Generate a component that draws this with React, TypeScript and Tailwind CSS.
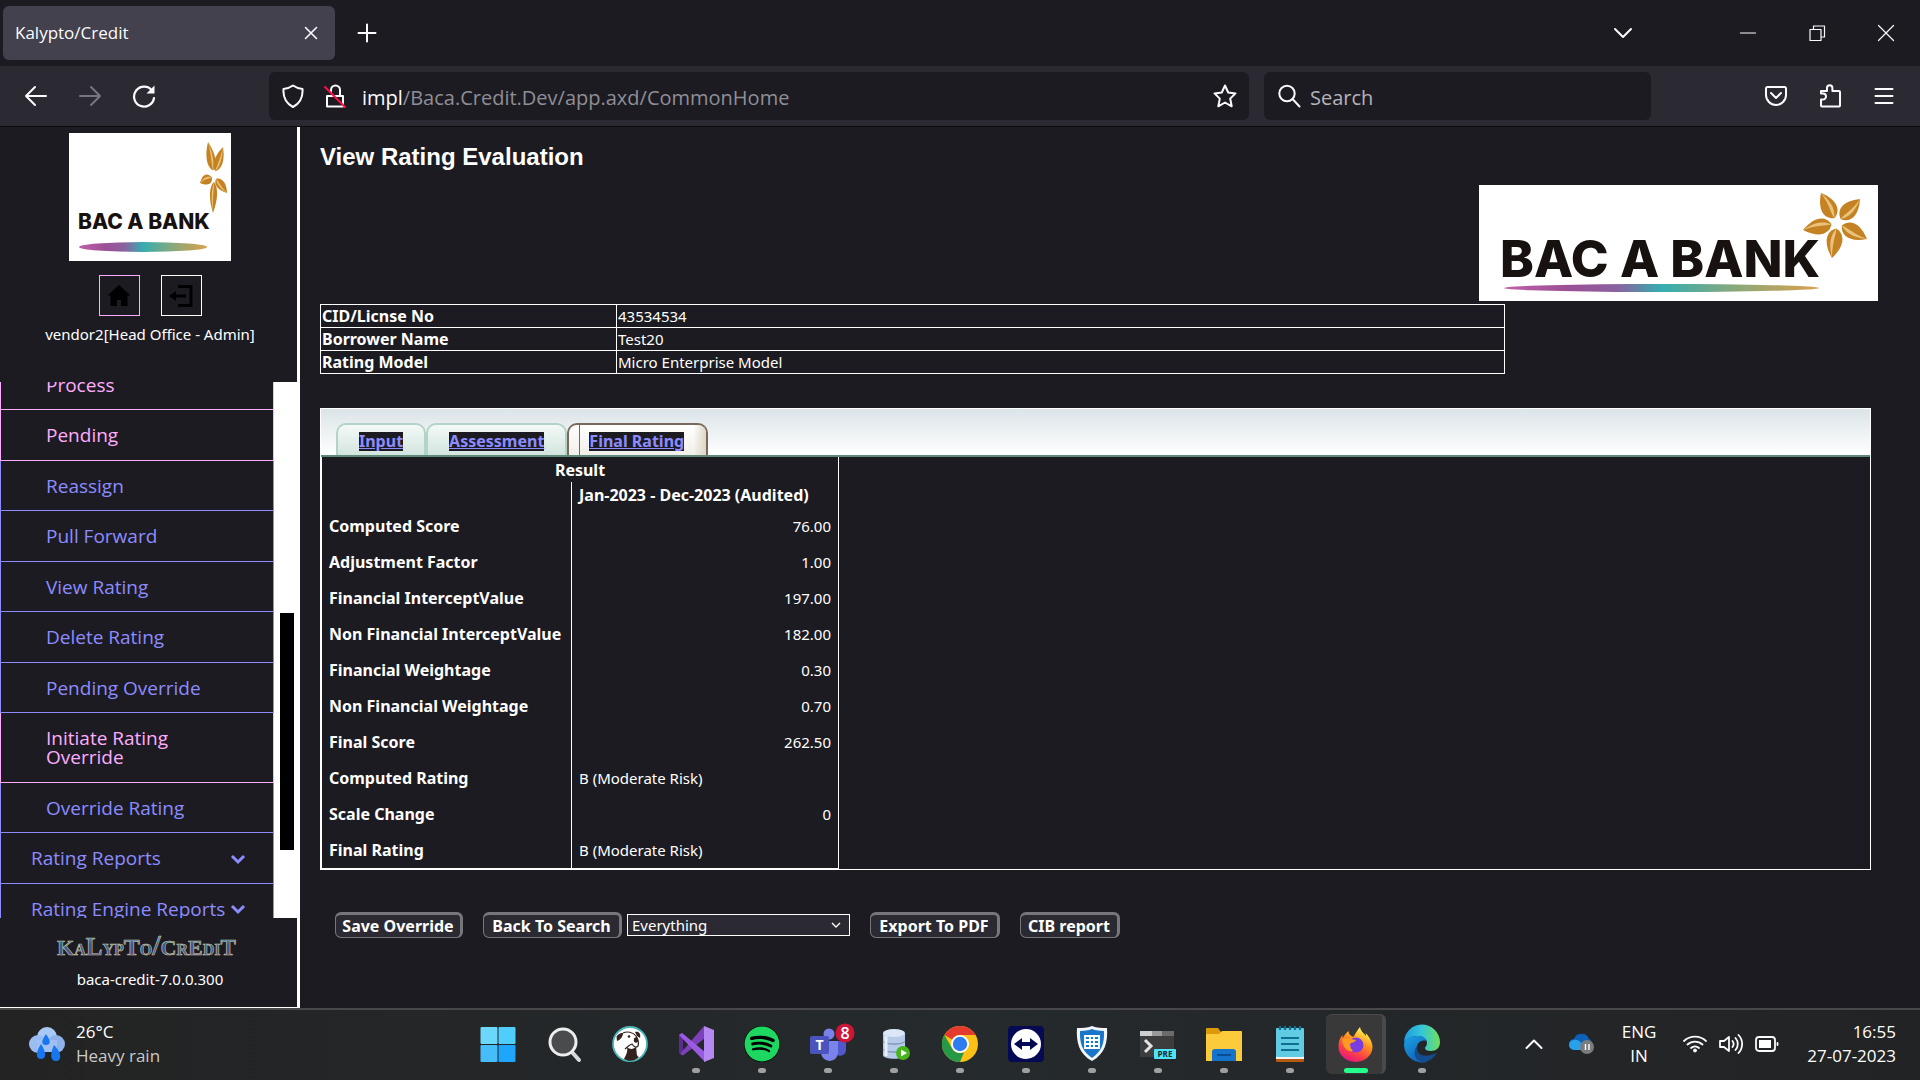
import React from "react";
import { FaSpotify } from "react-icons/fa";

const UI = "font-['Open_Sans','Noto_Sans',sans-serif]";
const BODY = "font-['Noto_Sans',sans-serif]";

type Pt = [number, number];

function petal(c: Pt, t: Pt, w: number) {
  const dx = t[0] - c[0];
  const dy = t[1] - c[1];
  const s: Pt = [c[0] + dx * 0.16, c[1] + dy * 0.16];
  const at = (f: number, side: number) => {
    const len = Math.hypot(dx, dy);
    return `${s[0] + dx * f - (dy / len) * w * side},${s[1] + dy * f + (dx / len) * w * side}`;
  };
  return {
    full: `M${s} C${at(0.12, 0.9)} ${at(0.45, 1)} ${t} C${at(0.45, -1)} ${at(0.12, -0.9)} ${s}Z`,
    vein: `M${s} C${at(0.15, -0.1)} ${at(0.4, 0.2)} ${t} C${at(0.4, 0.55)} ${at(0.2, 0.35)} ${s}Z`,
  };
}

function BankLogo(props: {
  id: string;
  width: number;
  height: number;
  center: Pt;
  tips: Pt[];
  petalWidths: number[];
  text: { x: number; y: number; size: number };
  bar: { x1: number; x2: number; y: number; r: number };
}) {
  const { id, width, height, center, tips, petalWidths, text, bar } = props;
  return (
    <svg width={width} height={height} viewBox={`0 0 ${width} ${height}`} role="img" aria-label="BAC A BANK" className="block bg-white">
      <defs>
        <linearGradient id={id}>
          <stop offset="0" stopColor="#c061a8" />
          <stop offset=".2" stopColor="#9c4f96" />
          <stop offset=".36" stopColor="#8a62a0" />
          <stop offset=".5" stopColor="#35aeb0" />
          <stop offset=".75" stopColor="#8fa878" />
          <stop offset="1" stopColor="#dba04a" />
        </linearGradient>
      </defs>
      <text x={text.x} y={text.y} fontSize={text.size} fontWeight="800" fill="#17110f" fontFamily="Inter, sans-serif">
        BAC A BANK
      </text>
      <ellipse cx={(bar.x1 + bar.x2) / 2} cy={bar.y} rx={(bar.x2 - bar.x1) / 2} ry={bar.r} fill={`url(#${id})`} />
      {tips.map((t, i) => {
        const p = petal(center, t, petalWidths[i]);
        return (
          <g key={i}>
            <path d={p.full} fill="#c58222" />
            <path d={p.vein} fill="#e9c27c" />
          </g>
        );
      })}
    </svg>
  );
}

function Stroke({ size = 24, children, w = 2, color = "#fbfbfe" }: { size?: number; children: React.ReactNode; w?: number; color?: string }) {
  return (
    <svg width={size} height={size} viewBox="0 0 24 24" fill="none" stroke={color} strokeWidth={w} strokeLinecap="round" strokeLinejoin="round" aria-hidden="true">
      {children}
    </svg>
  );
}

function TabStrip() {
  return (
    <header className="flex h-[66px] shrink-0 items-center bg-[#1c1b22] pl-[3px] text-[#fbfbfe]">
      <div className="flex h-[54px] w-[332px] items-center justify-between rounded-[6px] bg-[#42414d] pl-3 pr-3">
        <span className="text-[17px]">Kalypto/Credit</span>
        <button aria-label="Close tab">
          <Stroke w={1.6}><path d="M6.500 6.500l11 11M17.500 6.500l-11 11" /></Stroke>
        </button>
      </div>
      <button aria-label="New tab" className="ml-5">
        <Stroke><path d="M12 3.500v17M3.500 12h17" /></Stroke>
      </button>
      <div className="ml-auto flex items-center">
        <button aria-label="List all tabs" className="mr-[50px] flex w-20 justify-center">
          <Stroke><path d="M4 8l8 8 8-8" /></Stroke>
        </button>
        <button aria-label="Minimize" className="flex w-[69px] justify-center">
          <Stroke w={1.2}><path d="M4.500 12h15" /></Stroke>
        </button>
        <button aria-label="Restore" className="flex w-[69px] justify-center">
          <Stroke w={1.2}><path d="M5 8.500h11v11H5zM8.500 8.500V5h11v11H16" /></Stroke>
        </button>
        <button aria-label="Close window" className="flex w-[69px] justify-center">
          <Stroke w={1.2}><path d="M4.500 4.500l15 15M19.500 4.500l-15 15" /></Stroke>
        </button>
      </div>
    </header>
  );
}

function NavBar() {
  return (
    <nav className="flex h-[61px] shrink-0 items-center border-b border-[#0c0c0d] bg-[#2b2a33] pr-6 text-[#fbfbfe]">
      <button aria-label="Back" className="ml-6">
        <Stroke><path d="M22 12H2M11 3l-9 9 9 9" /></Stroke>
      </button>
      <button aria-label="Forward" className="ml-[30px]">
        <Stroke color="#77767f"><path d="M2 12h20M13 3l9 9-9 9" /></Stroke>
      </button>
      <button aria-label="Reload" className="ml-[30px]">
        <Stroke w={2.2}>
          <path d="M22 14a10 10 0 1 1-2-7.500" />
          <path d="M22.500 1.500v8h-8z" fill="#fbfbfe" stroke="none" />
        </Stroke>
      </button>
      <div className="ml-[113px] flex h-12 w-[980px] items-center rounded-[6px] bg-[#1c1b22] px-3">
        <Stroke><path d="M12 1.500c3 2.200 6 3 9.500 3.500.5 7-2 14-9.500 18C4.500 19 2 12 2.500 5 6 4.500 9 3.700 12 1.500z" /></Stroke>
        <span className="ml-[18px]">
          <Stroke>
            <path d="M4 12h16v10.500H4zM8 8V6a4.500 4.500 0 0 1 9 0v6" />
            <path d="M2 3l20 20" stroke="#ff0f3f" />
          </Stroke>
        </span>
        <div role="textbox" aria-label="Address" className="ml-[15px] flex-1 pt-[3px] text-xl text-[#8f8e97]">
          <span className="text-[#fbfbfe]">impl</span>/Baca.Credit.Dev/app.axd/CommonHome
        </div>
        <button aria-label="Bookmark this page">
          <Stroke><path d="M12 1.500l3.200 7 7.300.9-5.300 5.200L18.700 22.300 12 18.500 5.300 22.300l1.500-7.700L1.500 9.400l7.300-.9z" /></Stroke>
        </button>
      </div>
      <div className="ml-[15px] flex h-12 w-[387px] items-center rounded-[6px] bg-[#1c1b22] pl-[13px]">
        <Stroke><circle cx="10" cy="9.500" r="7.700" /><path d="M15.500 15l7 7.500" /></Stroke>
        <input aria-label="Search" placeholder="Search" className="ml-[9px] min-w-0 flex-1 bg-transparent pt-[3px] text-xl outline-none placeholder:text-[#b4b3bb]" />
      </div>
      <div className="ml-auto flex gap-[30px]">
        <button aria-label="Save to Pocket">
          <Stroke><path d="M2 4.500a1.500 1.500 0 0 1 1.500-1.500h17A1.500 1.500 0 0 1 22 4.500V11a10 10 0 0 1-20 0zM7 9l5 5 5-5" /></Stroke>
        </button>
        <button aria-label="Extensions">
          <Stroke><path d="M3 21.500v-6h2a3 3 0 0 0 0-6H3V7h6V4a2.700 2.700 0 0 1 5.400 0v3H21a1 1 0 0 1 1 1v13.500a1 1 0 0 1-1 1H4a1 1 0 0 1-1-1z" /></Stroke>
        </button>
        <button aria-label="Open application menu">
          <Stroke><path d="M3.500 5h17M3.500 12h17M3.500 19h17" /></Stroke>
        </button>
      </div>
    </nav>
  );
}

const MENU: { label: string; visited?: boolean; tall?: boolean; top?: boolean }[] = [
  { label: "Process", visited: true },
  { label: "Pending", visited: true },
  { label: "Reassign" },
  { label: "Pull Forward" },
  { label: "View Rating" },
  { label: "Delete Rating" },
  { label: "Pending Override" },
  { label: "Initiate Rating Override", visited: true, tall: true },
  { label: "Override Rating" },
  { label: "Rating Reports", top: true },
  { label: "Rating Engine Reports", top: true },
];

function Sidebar() {
  return (
    <aside className="flex w-[300px] shrink-0 flex-col border-b border-r-[3px] border-white">
      <div className="-mr-[3px] flex h-[255px] shrink-0 flex-col items-center pt-[6px]">
        <BankLogo
          id="bar-small"
          width={162}
          height={128}
          center={[145, 43]}
          tips={[[139, 9], [154, 14], [158, 60], [144, 80], [131, 50]]}
          petalWidths={[6, 6, 6, 5, 7]}
          text={{ x: 9, y: 96, size: 21 }}
          bar={{ x1: 10, x2: 138, y: 114, r: 5 }}
        />
        <div className="mt-[14px] flex gap-[21px]">
          <button aria-label="Home" className="flex size-[41px] items-center justify-center border border-[#ffadff]">
            <svg width="24" height="24" viewBox="0 0 24 24"><path d="M12 1L0.500 11.500h3V22H10v-6h4v6h6.500V11.500h3z" fill="#000" /></svg>
          </button>
          <button aria-label="Log out" className="flex size-[41px] items-center justify-center border border-white">
            <svg width="24" height="24" viewBox="0 0 24 24" fill="none" stroke="#000" strokeWidth="3"><path d="M9 2.500h13v19H9M17 12H5" /><path d="M0 12l7-5v10z" fill="#000" stroke="none" /></svg>
          </button>
        </div>
        <p className={`mt-[6px] text-[15px] leading-6 text-white ${BODY}`}>vendor2[Head Office - Admin]</p>
      </div>

      <div className="flex min-h-0 flex-1 overflow-hidden bg-white">
        <ul className="-mt-[22px] w-[274px] self-start bg-[#1c1b22]">
          {MENU.map((m) => (
            <li key={m.label} className={m.tall ? "h-[70px]" : "odd:h-[50px] even:h-[51px]"}>
              <a
                href="#"
                className={`flex h-full items-center justify-between border-x border-b pr-[27px] pt-px text-[19px] leading-[19px] ${m.top ? "pl-[30px]" : "pl-[45px]"} ${m.visited ? "border-[#ffadff] text-[#ffadff]" : "border-[#8c8cff] text-[#8c8cff]"}`}
              >
                <span className={m.tall ? "w-36" : "whitespace-nowrap"}>{m.label}</span>
                {m.top && (
                  <svg width="16" height="16" viewBox="0 0 16 16" fill="none" stroke="#8c8cff" strokeWidth="3"><path d="M2 5l6 6 6-6" /></svg>
                )}
              </a>
            </li>
          ))}
        </ul>
        <div className="flex flex-1 flex-col items-center pr-[3px] pl-[6px]">
          <div className="flex-[231]" />
          <div className="w-[14px] flex-[237] bg-black" />
          <div className="flex-[68]" />
        </div>
      </div>

      <div className="-mr-[3px] flex h-[89px] shrink-0 flex-col items-center pt-3">
        <svg width="184" height="34" viewBox="0 0 184 34" role="img" aria-label="Kalypto/Credit" className="mr-[5px]">
          <defs>
            <linearGradient id="kal" x2="0" y2="1">
              <stop offset="0.100" stopColor="#4fa8ea" />
              <stop offset="0.500" stopColor="#2b5f96" />
              <stop offset="0.900" stopColor="#5a4a90" />
            </linearGradient>
          </defs>
          <text x="1" y="25" fontFamily="'Liberation Serif', serif" fontWeight="700" fill="url(#kal)" stroke="#cfc9a0" strokeWidth="0.600" fontSize="16">
            <tspan fontSize="22">K</tspan>A<tspan fontSize="25">L</tspan>YP<tspan fontSize="24">T</tspan>O<tspan fontSize="30">/</tspan>
            <tspan fontSize="22">C</tspan>R<tspan fontSize="22">E</tspan>DI<tspan fontSize="23">T</tspan>
          </text>
        </svg>
        <p className={`mt-[3px] text-[15px] leading-6 text-white ${BODY}`}>baca-credit-7.0.0.300</p>
      </div>
    </aside>
  );
}

const INFO = [
  ["CID/Licnse No", "43534534"],
  ["Borrower Name", "Test20"],
  ["Rating Model", "Micro Enterprise Model"],
];

const RESULTS: [string, string][] = [
  ["Computed Score", "76.00"],
  ["Adjustment Factor", "1.00"],
  ["Financial InterceptValue", "197.00"],
  ["Non Financial InterceptValue", "182.00"],
  ["Financial Weightage", "0.30"],
  ["Non Financial Weightage", "0.70"],
  ["Final Score", "262.50"],
  ["Computed Rating", "B (Moderate Risk)"],
  ["Scale Change", "0"],
  ["Final Rating", "B (Moderate Risk)"],
];

const BTN = "h-[26px] rounded-[6px] border border-r-[3px] border-t-[3px] border-[#77767c] bg-[#2b2a33] font-bold leading-5 whitespace-nowrap";

function Main() {
  return (
    <main className={`min-w-0 flex-1 overflow-hidden pl-5 text-base text-white ${BODY}`}>
      <h1 className="mt-4 font-['Liberation_Sans',Arial,sans-serif] text-2xl font-bold leading-7">View Rating Evaluation</h1>
      <div className="mt-[14px] flex justify-end pr-[42px]">
        <BankLogo
          id="bar-large"
          width={399}
          height={116}
          center={[358, 38]}
          tips={[[342, 8], [381, 14], [388, 54], [353, 73], [324, 45]]}
          petalWidths={[11, 11, 11, 11, 11]}
          text={{ x: 21, y: 92, size: 51 }}
          bar={{ x1: 25, x2: 340, y: 103, r: 4 }}
        />
      </div>

      <div className="mr-[49px]">
        <table className="mt-[3px] w-[1185px] border-collapse">
          <tbody>
            {INFO.map(([k, v]) => (
              <tr key={k} className="h-[23px]">
                <th scope="row" className="w-[296px] border border-white p-0 pl-px text-left font-bold leading-[22px]">{k}</th>
                <td className="border border-white p-0 pl-px text-[15px] leading-[22px]">{v}</td>
              </tr>
            ))}
          </tbody>
        </table>

        <section className="mt-[34px] border border-white">
          <div className="flex h-12 items-end border-b-2 border-[#5f8a78] bg-linear-to-b from-[#dbe4e8] to-white pl-[15px] font-bold">
            {["Input", "Assessment"].map((t) => (
              <a key={t} href="#" className="flex h-8 items-center rounded-t-[10px] border-2 border-b-0 border-[#b3d3c8] bg-linear-to-b from-[#f3f9f7] to-[#d3e5df] px-[21px] pt-[2px]">
                <span className="bg-[#1c1b22] leading-[19px] text-[#8c8cff] underline">{t}</span>
              </a>
            ))}
            <a href="#" className="flex h-8 items-stretch rounded-t-[10px] border-2 border-b-0 border-[#7b685c] bg-linear-to-b from-white to-[#f1efe9]">
              <span className="w-[11px] border-r border-[#7b685c]" />
              <span className="flex items-center rounded-tr-[8px] bg-linear-to-r from-transparent from-90% to-[#dcd8c4] pt-[2px] pr-[22px] pl-[9px]">
                <span className="bg-[#1c1b22] leading-[19px] text-[#8c8cff] underline">Final Rating</span>
              </span>
            </a>
          </div>
          <table className="w-[518px] border-collapse border border-t-0 border-white">
            <thead>
              <tr className="h-[25px]">
                <th colSpan={2} className="p-0 leading-5">Result</th>
              </tr>
              <tr className="h-[26px]">
                <td className="w-[250px] border-r border-white p-0" />
                <th scope="col" className="p-0 px-[7px] text-left leading-5 whitespace-nowrap">Jan-2023 - Dec-2023 (Audited)</th>
              </tr>
            </thead>
            <tbody>
              {RESULTS.map(([k, v]) => (
                <tr key={k} className="h-9">
                  <th scope="row" className="border-r border-white p-0 pl-[7px] text-left leading-5 whitespace-nowrap">{k}</th>
                  <td className={`p-0 px-[7px] text-[15px] leading-5 ${v.startsWith("B") ? "text-left" : "text-right"}`}>{v}</td>
                </tr>
              ))}
            </tbody>
          </table>
        </section>
      </div>

      <div className="mt-[42px] flex items-center pl-[15px]">
        <button className={`w-[128px] ${BTN}`}>Save Override</button>
        <button className={`ml-5 w-[139px] ${BTN}`}>Back To Search</button>
        <div className="relative ml-[5px]">
          <select aria-label="Export section" className="block h-[22px] w-[223px] appearance-none border border-white bg-[#2b2a33] pl-1 text-[15px] leading-5">
            <option>Everything</option>
          </select>
          <svg width="12" height="12" viewBox="0 0 12 12" fill="none" stroke="#fff" strokeWidth="1.400" className="pointer-events-none absolute top-[5px] right-2"><path d="M2 4l4 4 4-4" /></svg>
        </div>
        <button className={`ml-5 w-[130px] ${BTN}`}>Export To PDF</button>
        <button className={`ml-5 w-[100px] ${BTN}`}>CIB report</button>
      </div>
    </main>
  );
}

function I({ children }: { children: React.ReactNode }) {
  return <svg width="36" height="36" viewBox="0 0 36 36" className="overflow-visible" aria-hidden="true">{children}</svg>;
}

const APPS: { name: string; dot?: boolean; active?: boolean; icon: React.ReactNode }[] = [
  {
    name: "Start",
    icon: (
      <I>
        <rect x="0.500" y="1" width="17" height="17" rx="1" fill="#6bd7fb" /><rect x="18.500" y="1" width="17" height="17" rx="1" fill="#4fcdfb" />
        <rect x="0.500" y="19" width="17" height="17" rx="1" fill="#45bdf8" /><rect x="18.500" y="19" width="17" height="17" rx="1" fill="#1ea6fb" />
      </I>
    ),
  },
  {
    name: "Search",
    icon: (
      <I>
        <path d="M25 25l8 9" stroke="#d6dadb" strokeWidth="4" strokeLinecap="round" />
        <circle cx="17" cy="16" r="13" fill="#494b4c" stroke="#eceeee" strokeWidth="3" />
      </I>
    ),
  },
  {
    name: "DBeaver",
    icon: (
      <I>
        <circle cx="18" cy="18" r="17" fill="#fff" stroke="#4bb5b8" strokeWidth="1.800" />
        <path d="M11 7c4-2 10-1 13 3 2 3 3 7 2 10-2 2-4 1-6-2-3 1-5 3-7 5" fill="none" stroke="#33231c" strokeWidth="1.200" />
        <path d="M4.500 10.500C6 8 9 6.500 11 7c0 4-3 7-6 8z" fill="#33231c" />
        <path d="M23 6c4-1 6 2 5 6l-3-2z" fill="#33231c" />
        <circle cx="17" cy="10.500" r="1.300" fill="#33231c" /><ellipse cx="24" cy="14" rx="2.200" ry="2.800" fill="#33231c" />
        <path d="M15 21c3 3 7 2 9 0 1 5 0 9 3 10-4 4-10 5-15 2 2-4 4-7 3-12z" fill="#33231c" />
      </I>
    ),
  },
  {
    name: "Visual Studio",
    dot: true,
    icon: (
      <I>
        <path d="M1 9l3-2 5 4v14l-5 4-3-2z" fill="#5b2b92" />
        <path d="M5 12v12l4-3v-6z" fill="#25282b" />
        <path d="M26 0L2 28l3 1.500L27 12z" fill="#7d40bb" />
        <path d="M4 7L27 26v10L1 9z" fill="#9b5be0" />
        <path d="M26 0l10 4v28l-10 4z" fill="#b688f2" />
      </I>
    ),
  },
  { name: "Spotify", dot: true, icon: <span className="rounded-full bg-black"><FaSpotify size={36} color="#1ed760" /></span> },
  {
    name: "Teams",
    dot: true,
    icon: (
      <I>
        <circle cx="19" cy="8" r="5.500" fill="#7b83eb" /><circle cx="31" cy="10" r="4" fill="#5059c9" />
        <path d="M24 15h12v9a6 6 0 0 1-9 5z" fill="#5059c9" /><path d="M11 15h17v11a8.500 8.500 0 0 1-17 1z" fill="#7b83eb" />
        <rect x="0" y="10" width="19" height="18" rx="2" fill="#4b53bc" />
        <text x="9.500" y="24" textAnchor="middle" fontSize="14" fontWeight="700" fill="#fff" fontFamily="Open Sans, sans-serif">T</text>
        <circle cx="35" cy="7" r="9.500" fill="#cf1639" />
        <text x="35" y="13" textAnchor="middle" fontSize="16" fontWeight="600" fill="#fff" fontFamily="Open Sans, sans-serif">8</text>
      </I>
    ),
  },
  {
    name: "Database tools",
    dot: true,
    icon: (
      <I>
        <path d="M7 7v22c0 5 22 5 22 0V7z" fill="#b7cbe8" /><path d="M7 15c2 4 20 4 22 0M7 23c2 4 20 4 22 0" fill="none" stroke="#7d96bb" strokeWidth="1.400" />
        <ellipse cx="18" cy="7" rx="11" ry="4" fill="#dbe7f6" /><path d="M10 10v20" stroke="#e6effa" strokeWidth="3" />
        <circle cx="27" cy="27" r="7" fill="#47b51a" /><path d="M25 23.500l6 3.500-6 3.500z" fill="#fff" />
      </I>
    ),
  },
  {
    name: "Chrome",
    dot: true,
    icon: (
      <I>
        <circle cx="18" cy="18" r="18" fill="#fbc116" />
        <path d="M2.400 9A18 18 0 0 1 33.600 9H18a9 9 0 0 0-7.800 4.500z" fill="#e33b2e" />
        <path d="M2.400 9L10.200 22.500A9 9 0 0 0 18 27L22 26.500 18 36A18 18 0 0 1 2.400 9z" fill="#279847" />
        <circle cx="18" cy="18" r="9" fill="#fff" /><circle cx="18" cy="18" r="7.200" fill="#2e7af0" />
      </I>
    ),
  },
  {
    name: "TeamViewer",
    dot: true,
    icon: (
      <I>
        <rect width="36" height="36" rx="4" fill="#050a52" /><circle cx="18" cy="18" r="15" fill="#fff" />
        <path d="M6 18l8-6v4h8v-4l8 6-8 6v-4h-8v4z" fill="#050a52" />
      </I>
    ),
  },
  {
    name: "VPN Shield",
    dot: true,
    icon: (
      <I>
        <path d="M18 0c5 2 10 2 15 2 1 14-2 26-15 33C5 28 2 16 3 2c5 0 10 0 15-2z" fill="#f2f6fa" />
        <path d="M18 3c4 1.500 8 1.800 12 2 .5 12-2 20-12 27C8 25 5.500 17 6 5c4-.2 8-.5 12-2z" fill="#1976c8" />
        <path d="M11 10h14v12H11zM16 10v12M20 10v12M11 14h14M11 18h14" fill="none" stroke="#fff" strokeWidth="1.800" />
      </I>
    ),
  },
  {
    name: "Terminal Preview",
    dot: true,
    icon: (
      <I>
        <rect x="0" y="5" width="34" height="26" fill="#3d3d3e" /><rect x="0" y="5" width="12" height="5" fill="#cfcfcf" /><rect x="12" y="5" width="10" height="5" fill="#9a9a9a" /><rect x="22" y="5" width="12" height="5" fill="#6b6b6b" />
        <path d="M5 14l6 6-6 6" fill="none" stroke="#e4e4e4" strokeWidth="3" />
        <rect x="14" y="23" width="22" height="10" rx="1" fill="#4fe3fb" />
        <text x="25" y="31" textAnchor="middle" fontSize="8" fontWeight="700" fill="#10282c" fontFamily="Open Sans, sans-serif">PRE</text>
      </I>
    ),
  },
  {
    name: "File Explorer",
    dot: true,
    icon: (
      <I>
        <path d="M0 3a1 1 0 0 1 1-1h11l3 4v6H0z" fill="#dc9a08" /><path d="M0 8h13l3-3h19a1 1 0 0 1 1 1v29H0z" fill="#fccb3c" />
        <path d="M6 35V26a3 3 0 0 1 3-3h18a3 3 0 0 1 3 3v9z" fill="#1573cc" /><path d="M11 29h14" stroke="#0a4b91" strokeWidth="2" />
      </I>
    ),
  },
  {
    name: "Notepad",
    dot: true,
    icon: (
      <I>
        <rect x="4" y="30" width="28" height="6" rx="1" fill="#b6580e" /><path d="M4 30h28v3H4z" fill="#f4f4f4" />
        <rect x="4" y="2" width="28" height="29" rx="1" fill="#61cbe3" />
        <path d="M8 0v4M13 0v4M18 0v4M23 0v4M28 0v4" stroke="#0d6f90" strokeWidth="2.200" /><path d="M9 12h18M9 18h18M9 24h18" stroke="#0d6f90" strokeWidth="2" />
      </I>
    ),
  },
  {
    name: "Firefox",
    active: true,
    icon: (
      <I>
        <defs>
          <linearGradient id="ff" x1="0.800" y1="0" x2="0.300" y2="1"><stop offset="0.100" stopColor="#fff14a" /><stop offset="0.450" stopColor="#ff8a1e" /><stop offset="0.750" stopColor="#fb3a4a" /><stop offset="1" stopColor="#e01586" /></linearGradient>
        </defs>
        <path d="M22 0c1 5 4 6 6 9 0-1 0-2-.5-3 5 5 7 10 7 14a17 15 0 0 1-34 0c0-5 1-9 4-12v3c2-2 3-5 6-7 0 3 2 5 5 6 2-4 4-7 6.500-10z" fill="url(#ff)" />
        <circle cx="18" cy="18" r="7.500" fill="#7a3ee0" /><path d="M4 12c4-1 8 0 14 1-1 3-5 2-6 4 0 3 1 5 3 7-6 1-10-3-11-12z" fill="#ff9a20" />
      </I>
    ),
  },
  {
    name: "Edge",
    dot: true,
    icon: (
      <I>
        <defs>
          <linearGradient id="edge-top"><stop stopColor="#1b9de2" /><stop offset="0.500" stopColor="#35c6d8" /><stop offset="1" stopColor="#6fe05a" /></linearGradient>
          <linearGradient id="edge-body" x2="0.600" y2="1"><stop stopColor="#1aa2e6" /><stop offset="1" stopColor="#1160b8" /></linearGradient>
        </defs>
        <path d="M0 17A18 18 0 0 1 36 16c0 6-4 9-9 9-4 0-6-1-6-3 0-1 2-2 2-5 0-4-4-7-9-7-8 0-13 4-14 7z" fill="url(#edge-top)" />
        <path d="M0 18c1-5 6-8 13-8 5 0 9 2 10 5-7-2-11 3-10 9 1 7 6 11 11 11.500A18 18 0 0 1 0 18z" fill="url(#edge-body)" />
        <path d="M13 20c-1 8 5 13 20 7-4 6-9 9-15 9-7-2-10-9-5-16z" fill="#134d8f" />
      </I>
    ),
  },
];

function Taskbar() {
  return (
    <footer className="grid h-[72px] shrink-0 grid-cols-[1fr_auto_1fr] border-t-2 border-[#48484a] bg-linear-to-r from-[#232323] via-[#252a2d] to-[#222324] text-[17px] leading-6 text-white">
      <div className="flex items-center pl-[29px] pb-[2px]">
        <svg width="36" height="36" viewBox="0 0 36 36" aria-hidden="true">
          <circle cx="18" cy="11" r="10" fill="#a9c8f5" /><circle cx="9" cy="18" r="9" fill="#9bbcf0" /><circle cx="27" cy="18" r="9" fill="#8fb0ea" /><path d="M8 14h20v12H8z" fill="#9fc0f2" />
          <path d="M17 8c-5 7-5 11 0 11s5-4 0-11zM12 18c-6 9-5 15 0 15s6-6 0-15zM25 19c-4 9-4 16 2 16s6-8-2-16z" fill="#1677f0" />
        </svg>
        <div className="ml-[11px]">
          <p>26°C</p>
          <p className="text-[#c9c9c9]">Heavy rain</p>
        </div>
      </div>
      <div className="flex">
        {APPS.map((a) => (
          <button key={a.name} aria-label={a.name} className="flex w-[66px] justify-center">
            <span className={`mt-[4px] flex h-[60px] w-[60px] flex-col items-center rounded-[6px] pt-3 ${a.active ? "border-t border-r-4 border-[#4a4a4a] bg-[#39393a] pl-1" : ""}`}>
              {a.icon}
              {a.dot && <span className="mt-[6px] h-[5px] w-2 rounded-full bg-[#a0a0a0]" />}
              {a.active && <span className="mt-[5px] h-[5px] w-6 rounded-full bg-[#22ff8a]" />}
            </span>
          </button>
        ))}
      </div>
      <div className="flex items-center justify-end pr-6 pb-[2px]">
        <button aria-label="Show hidden icons"><Stroke><path d="M4.500 16l7.500-7.500 7.500 7.500" /></Stroke></button>
        <svg width="26" height="22" viewBox="0 0 26 22" className="ml-[23px]" aria-label="OneDrive" role="img">
          <path d="M5 16a5 5 0 0 1 0-10A8 8 0 0 1 20 6c4 1 4 10 0 10z" fill="#0d62b8" /><path d="M5 17a5 5 0 0 1 0-10c5-1 8 3 12 10z" fill="#28a0ea" />
          <circle cx="18" cy="14" r="7" fill="#7c7c7c" /><path d="M16.500 11v6M20 11v6" stroke="#fff" strokeWidth="1.400" />
        </svg>
        <div className="ml-[27px] text-center"><p>ENG</p><p>IN</p></div>
        <span className="ml-[27px]"><Stroke w={1.8}><path d="M1 9a16 16 0 0 1 22 0M4.500 12.500a11 11 0 0 1 15 0M8 16a6 6 0 0 1 8 0" /><circle cx="12" cy="18.500" r="1.500" fill="#fff" stroke="#fff" strokeWidth="1" /></Stroke></span>
        <span className="ml-3"><Stroke w={1.8}><path d="M1 9v6h4l5 4V5L5 9zM13.500 9a5 5 0 0 1 0 6M16.500 6a9 9 0 0 1 0 12M19.500 3a13 13 0 0 1 0 18" /></Stroke></span>
        <span className="ml-3"><Stroke w={1.8}><rect x="1" y="5" width="19" height="14" rx="3" /><path d="M22.500 11v2" /><path d="M4 8h12v8H4z" fill="#fff" stroke="none" /></Stroke></span>
        <div className="ml-7 text-right"><p>16:55</p><p>27-07-2023</p></div>
      </div>
    </footer>
  );
}

export default function App() {
  return (
    <div className={`flex h-screen flex-col overflow-hidden bg-[#1c1b22] ${UI}`}>
      <TabStrip />
      <NavBar />
      <div className="flex min-h-0 flex-1">
        <Sidebar />
        <Main />
      </div>
      <Taskbar />
    </div>
  );
}
